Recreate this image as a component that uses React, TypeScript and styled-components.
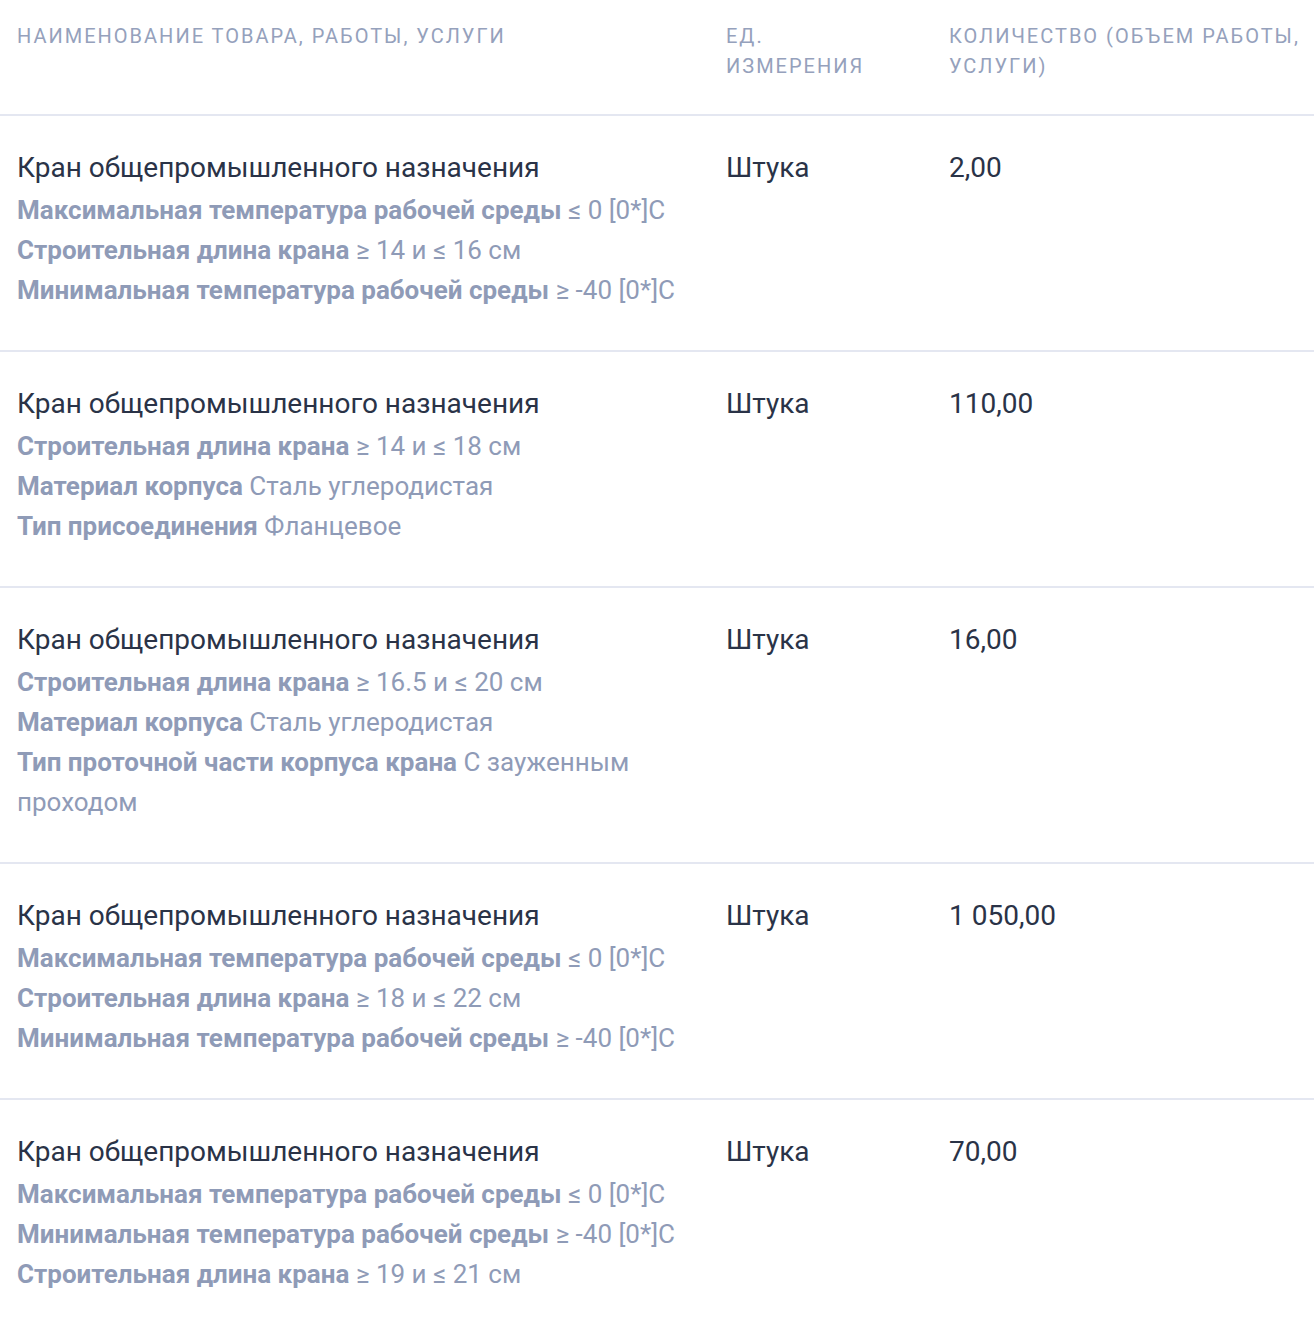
import React, { FC } from 'react';
import styled, { createGlobalStyle } from 'styled-components';

interface Attribute {
  name: string;
  value: string;
}

interface Item {
  id: number;
  title: string;
  unit: string;
  quantity: string;
  attributes: Attribute[];
}

const ITEMS: Item[] = [
  {
    id: 1,
    title: 'Кран общепромышленного назначения',
    unit: 'Штука',
    quantity: '2,00',
    attributes: [
      { name: 'Максимальная температура рабочей среды', value: '≤ 0 [0*]С' },
      { name: 'Строительная длина крана', value: '≥ 14 и ≤ 16 см' },
      { name: 'Минимальная температура рабочей среды', value: '≥ -40 [0*]С' },
    ],
  },
  {
    id: 2,
    title: 'Кран общепромышленного назначения',
    unit: 'Штука',
    quantity: '110,00',
    attributes: [
      { name: 'Строительная длина крана', value: '≥ 14 и ≤ 18 см' },
      { name: 'Материал корпуса', value: 'Сталь углеродистая' },
      { name: 'Тип присоединения', value: 'Фланцевое' },
    ],
  },
  {
    id: 3,
    title: 'Кран общепромышленного назначения',
    unit: 'Штука',
    quantity: '16,00',
    attributes: [
      { name: 'Строительная длина крана', value: '≥ 16.5 и ≤ 20 см' },
      { name: 'Материал корпуса', value: 'Сталь углеродистая' },
      { name: 'Тип проточной части корпуса крана', value: 'С зауженным проходом' },
    ],
  },
  {
    id: 4,
    title: 'Кран общепромышленного назначения',
    unit: 'Штука',
    quantity: '1 050,00',
    attributes: [
      { name: 'Максимальная температура рабочей среды', value: '≤ 0 [0*]С' },
      { name: 'Строительная длина крана', value: '≥ 18 и ≤ 22 см' },
      { name: 'Минимальная температура рабочей среды', value: '≥ -40 [0*]С' },
    ],
  },
  {
    id: 5,
    title: 'Кран общепромышленного назначения',
    unit: 'Штука',
    quantity: '70,00',
    attributes: [
      { name: 'Максимальная температура рабочей среды', value: '≤ 0 [0*]С' },
      { name: 'Минимальная температура рабочей среды', value: '≥ -40 [0*]С' },
      { name: 'Строительная длина крана', value: '≥ 19 и ≤ 21 см' },
    ],
  },
];

const GlobalStyle = createGlobalStyle`
  * {
    box-sizing: border-box;
  }

  body {
    margin: 0;
    background-color: #ffffff;
    font-family: Roboto, 'Noto Sans', sans-serif;
  }
`;

const Table = styled.div`
  width: 1314px;
`;

const Row = styled.div<{ $head?: boolean }>`
  display: grid;
  grid-template-columns: 709px 223px 1fr;

  padding: ${({ $head }) => ($head ? '21px 0 33px' : '32px 0 40px')};
  border-bottom: 2px solid #e4e7f1;

  &:last-child {
    border-bottom: none;
  }
`;

const HeadCell = styled.div<{ $narrow?: boolean }>`
  padding: ${({ $narrow }) => ($narrow ? '0 40px 0 17px' : '0 0 0 17px')};

  color: #95a1bc;
  font-size: 20px;
  line-height: 30px;
  letter-spacing: 2px;
  text-transform: uppercase;
`;

const Cell = styled.div`
  padding: 0 18px 0 17px;
`;

const MainText = styled.p`
  margin: 0 0 2px;

  color: #2a3347;
  font-size: 28px;
  line-height: 40px;
`;

const AttributeLine = styled.p`
  margin: 0;

  color: #8f9bb7;
  font-size: 26px;
  line-height: 40px;

  b {
    font-weight: 700;
  }
`;

const App: FC = (): JSX.Element => {
  return (
    <Table>
      <GlobalStyle />
      <Row $head>
        <HeadCell>Наименование товара, работы, услуги</HeadCell>
        <HeadCell $narrow>Ед. измерения</HeadCell>
        <HeadCell>Количество (объем работы, услуги)</HeadCell>
      </Row>
      {ITEMS.map((item: Item) => (
        <Row key={item.id}>
          <Cell>
            <MainText>{item.title}</MainText>
            {item.attributes.map((attr) => (
              <AttributeLine key={attr.name}>
                <b>{attr.name}</b> {attr.value}
              </AttributeLine>
            ))}
          </Cell>
          <Cell>
            <MainText>{item.unit}</MainText>
          </Cell>
          <Cell>
            <MainText>{item.quantity}</MainText>
          </Cell>
        </Row>
      ))}
    </Table>
  );
};

export default App;
